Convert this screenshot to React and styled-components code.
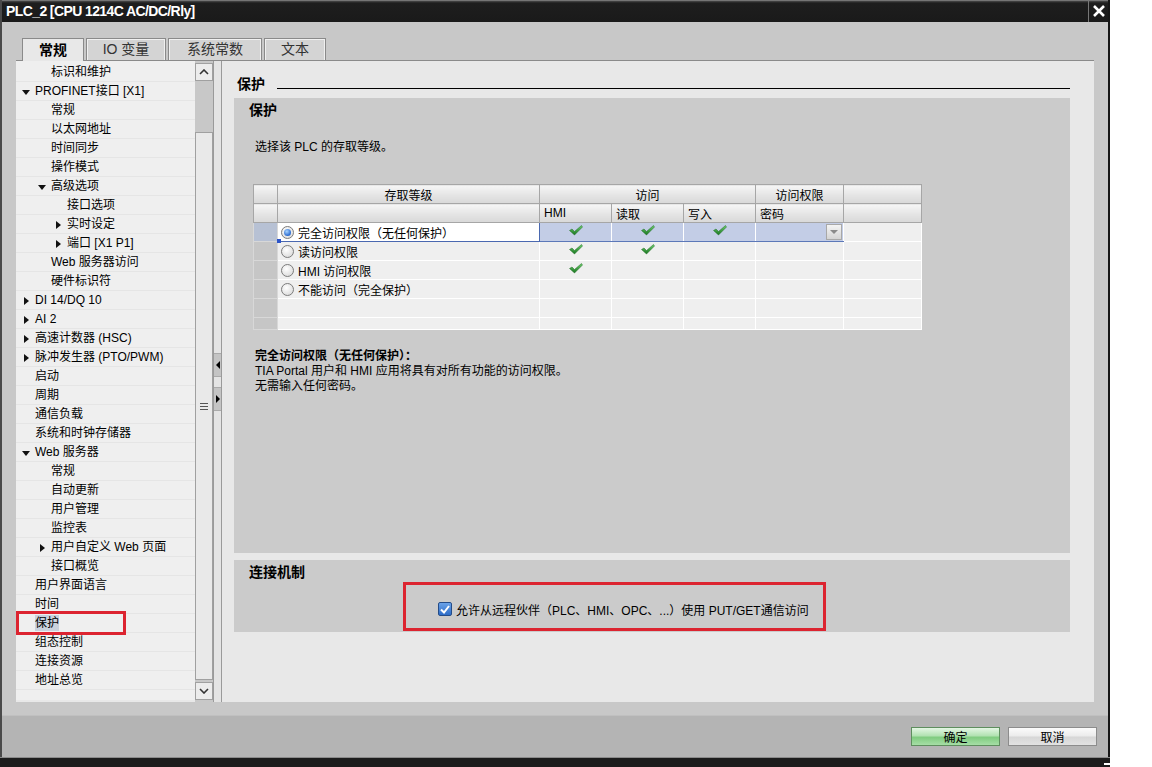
import React from 'react';
import styled, { createGlobalStyle, css } from 'styled-components';

const GlobalStyle = createGlobalStyle`
  html, body { margin: 0; padding: 0; background: #fff; }
  body { font-family: "Liberation Sans", "Noto Sans CJK SC", sans-serif; font-size: 12px; color: #000; }
  * { box-sizing: border-box; }
`;

const tree = [
  ['标识和维护', 1],
  ['PROFINET接口 [X1]', 0, 'down'],
  ['常规', 1], ['以太网地址', 1], ['时间同步', 1], ['操作模式', 1],
  ['高级选项', 1, 'down'],
  ['接口选项', 2],
  ['实时设定', 2, 'right'],
  ['端口 [X1 P1]', 2, 'right'],
  ['Web 服务器访问', 1], ['硬件标识符', 1],
  ['DI 14/DQ 10', 0, 'right'], ['AI 2', 0, 'right'],
  ['高速计数器 (HSC)', 0, 'right'], ['脉冲发生器 (PTO/PWM)', 0, 'right'],
  ['启动', 0], ['周期', 0], ['通信负载', 0], ['系统和时钟存储器', 0],
  ['Web 服务器', 0, 'down'],
  ['常规', 1], ['自动更新', 1], ['用户管理', 1], ['监控表', 1],
  ['用户自定义 Web 页面', 1, 'right'],
  ['接口概览', 1],
  ['用户界面语言', 0], ['时间', 0], ['保护', 0, null, true],
  ['组态控制', 0], ['连接资源', 0], ['地址总览', 0],
];

const levels = [
  { label: '完全访问权限（无任何保护）', hmi: true, read: true, write: true, selected: true },
  { label: '读访问权限', hmi: true, read: true },
  { label: 'HMI 访问权限', hmi: true },
  { label: '不能访问（完全保护）' },
];

const Window = styled.div`
  width: 1110px; height: 767px;
  display: flex; flex-direction: column;
  background: #c8c8c8;
  border-left: 2px solid #4a4a4a;
  border-right: 2px solid #161616;
`;

const TitleBar = styled.div`
  height: 22px; flex-shrink: 0;
  display: flex; align-items: center; justify-content: space-between;
  background: linear-gradient(#a0a0a0 0, #4a4a4a 1px, #1e1e1e 3px, #1a1a1a 100%);
  color: #fff; font-weight: 700; font-size: 14px; letter-spacing: -0.6px;
  padding-left: 4px;
`;

const CloseBtn = styled.div`
  width: 20px; height: 22px;
  display: flex; align-items: center; justify-content: center;
  border-left: 1px solid #777;
`;

const Body = styled.div`
  flex: 1; display: flex; flex-direction: column;
  padding: 16px 14px 0 14px;
`;

const TabStrip = styled.div`
  display: flex; height: 22px; padding-left: 6px; gap: 2px;
`;

const Tab = styled.div`
  height: 22px; padding: 0 12px 3px;
  display: flex; align-items: center; justify-content: center;
  font-size: 14px; border: 1px solid #8a8a8a; border-bottom: none;
  ${({ $active }) => ($active
    ? css`background: #e8e8e8; font-weight: 700; height: 23px; position: relative; z-index: 1;`
    : css`background: #d4d4d4; color: #333; box-shadow: inset 1px 1px 0 #f0f0f0, inset -1px 0 0 #f0f0f0;`)}
  min-width: ${({ $w }) => $w}px;
`;

const Panel = styled.div`
  height: 642px; display: flex;
  background: #e8e8e8; border-top: 1px solid #8a8a8a;
`;

const TreeCol = styled.div`
  width: 179px; padding-top: 2px; background: #efefef;
  height: 639px;
`;

const TreeRow = styled.div`
  position: relative; height: 19px;
  display: flex; align-items: center;
  padding-left: ${({ $level }) => 19 + $level * 16}px;
  border-bottom: 1px solid #e5e5e5;
  white-space: nowrap;
`;

const Arrow = styled.span`
  position: absolute; width: 0; height: 0;
  ${({ $dir, $level }) => ($dir === 'down'
    ? css`left: ${6 + $level * 16}px; top: 8px; border-left: 4px solid transparent; border-right: 4px solid transparent; border-top: 5px solid #111;`
    : css`left: ${8 + $level * 16}px; top: 6px; border-top: 4px solid transparent; border-bottom: 4px solid transparent; border-left: 5px solid #111;`)}
`;

const TreeLabel = styled.span`
  line-height: 16px;
  ${({ $selected }) => $selected && css`background: #c9d1dd;`}
`;

const RedMark = styled.div`
  position: absolute; left: 0; top: -3px; width: 110px; height: 24px;
  border: 3px solid #dc2430; pointer-events: none;
`;

const ScrollCol = styled.div`
  width: 18px; padding: 2px 0; display: flex; flex-direction: column;
  background: #c8c8c8;
`;

const ScrollBtn = styled.div`
  height: 18px; flex-shrink: 0;
  display: flex; align-items: center; justify-content: center;
  background: #ececec; border: 1px solid #a0a0a0;
`;

const ScrollTrack = styled.div`
  flex: 1; display: flex; flex-direction: column; padding: 51px 0 2px;
`;

const Thumb = styled.div`
  flex: 1; background: #e9e9e9; border: 1px solid #a0a0a0;
  display: flex; align-items: center; justify-content: center;
`;

const Grip = styled.div`
  width: 8px; height: 7px;
  border-top: 1px solid #555; border-bottom: 1px solid #555;
  position: relative;
  &::after { content: ''; position: absolute; left: 0; right: 0; top: 2px; border-top: 1px solid #555; }
`;

const Splitter = styled.div`
  width: 9px; display: flex; flex-direction: column; align-items: stretch;
  padding-top: 292px; gap: 10px;
  background: #e4e4e4; border-left: 1px solid #9a9a9a; border-right: 1px solid #9a9a9a;
`;

const SplitBtn = styled.div`
  height: 24px; background: #c4c4c4;
  display: flex; align-items: center; justify-content: center;
  border-top: 1px solid #aaa; border-bottom: 1px solid #aaa;
`;

const Tri = styled.span`
  width: 0; height: 0;
  border-top: 4px solid transparent; border-bottom: 4px solid transparent;
  ${({ $dir }) => ($dir === 'left' ? css`border-right: 4px solid #000;` : css`border-left: 4px solid #000;`)}
`;

const Content = styled.div`
  flex: 1; display: flex; flex-direction: column;
  padding: 0 24px 0 12px;
`;

const PageHead = styled.div`
  height: 37px; padding-top: 6px;
  display: flex; align-items: center; gap: 12px;
  font-size: 14px; font-weight: 700; padding-left: 3px;
`;

const HeadRule = styled.div`
  flex: 1; height: 1px; background: #000; margin-top: 12px;
`;

const Section = styled.section`
  background: #cbcbcb; padding: 4px 15px 0;
  height: ${({ $h }) => $h}px;
  margin-bottom: 7px;
`;

const SectionTitle = styled.div`
  font-size: 14px; font-weight: 700; line-height: 17px;
`;

const Note = styled.p`
  margin: 20px 0 0 6px; line-height: 16px;
`;

const Grid = styled.table`
  margin: 29px 0 0 4px;
  width: 668px; table-layout: fixed; border-collapse: collapse;
`;

const Th = styled.th`
  height: 19px; padding: 0 4px; font-weight: 400;
  text-align: ${({ $center }) => ($center ? 'center' : 'left')};
  background: linear-gradient(#f6f6f6, #e6e6e6 50%, #d8d8d8);
  border: 1px solid #a6a6a6;
  white-space: nowrap;
`;

const Td = styled.td`
  height: ${({ $h }) => $h || 19}px; padding: 0;
  background: #efefef;
  border: 1px solid #fff;
  text-align: center; vertical-align: middle;
  ${({ $head }) => $head && css`background: #c6c6c6; border-color: #d8d8d8;`}
  ${({ $sel }) => $sel && css`background: #c3cde6; border-top: 1px solid #5c78b8; border-bottom: 1px solid #5c78b8;`}
  ${({ $sel, $head }) => $sel && $head && css`background: #b7c1d4; border-color: #d8d8d8;`}
  ${({ $edit }) => $edit && css`background: #fff; border: 1px solid #4a68b0; position: relative;`}
`;

const LevelCell = styled.div`
  display: flex; align-items: center; gap: 4px; padding-left: 3px; white-space: nowrap;
`;

const Radio = styled.span`
  width: 13px; height: 13px; border-radius: 50%; flex-shrink: 0;
  border: 1px solid #7c7c7c;
  background: radial-gradient(circle at 40% 35%, #ffffff, #dcdcdc 80%);
  display: flex; align-items: center; justify-content: center;
  ${({ $on }) => $on && css`
    &::after { content: ''; width: 7px; height: 7px; border-radius: 50%;
      background: radial-gradient(circle at 40% 35%, #a8d4ff, #2a6ad0 70%, #1a4aa0); }
  `}
`;

const Handle = styled.span`
  position: absolute; left: -1px; bottom: -2px; width: 4px; height: 4px; background: #2c54c8;
`;

const PwCell = styled.div`
  display: flex; justify-content: flex-end; padding-right: 1px;
`;

const DropBtn = styled.span`
  width: 16px; height: 16px; display: flex; align-items: center; justify-content: center;
  background: linear-gradient(#f4f4f4, #d4d4d4); border: 1px solid #a8a8a8;
  &::after { content: ''; border-left: 4px solid transparent; border-right: 4px solid transparent; border-top: 4px solid #8a8a8a; }
`;

const Desc = styled.div`
  margin: 19px 0 0 6px; line-height: 15px;
  strong { font-weight: 700; }
`;

const RedBox = styled.div`
  margin: 1px 0 0 154px; width: 423px; height: 49px;
  border: 3px solid #dc2430;
  padding: 5px 0 0 32px;
  display: flex; align-items: center; gap: 4px;
`;

const Check = styled.span`
  width: 14px; height: 14px; border-radius: 2px; flex-shrink: 0;
  background: linear-gradient(#6aa2e8, #2d6cc8);
  border: 1px solid #244c88;
  display: flex; align-items: center; justify-content: center;
`;

const Footer = styled.div`
  height: 42px; margin: 13px -14px 0; padding: 0 11px 0 0;
  background: #b4b4b4; border-top: 1px solid #c0c0c0;
  display: flex; align-items: center; justify-content: flex-end; gap: 8px;
`;

const Button = styled.button`
  width: 89px; height: 19px; padding: 0;
  font: inherit; font-size: 12px; color: #000;
  ${({ $primary }) => ($primary
    ? css`background: linear-gradient(#e4f6e4, #b2e2b2 45%, #80cc80 55%, #a6dea6); border: 1px solid #5e8e5e;`
    : css`background: linear-gradient(#fbfbfb, #ebebeb 48%, #d6d6d6 52%, #e2e2e2); border: 1px solid #8c8c8c;`)}
`;

const BottomEdge = styled.div`
  height: 10px; flex-shrink: 0; background: #1c1c1c; border-top: 1px solid #8a8a8a;
  margin: 0 -2px; position: relative;
  &::after { content: ''; position: absolute; right: -2px; bottom: 2px; width: 6px; height: 6px;
    border-right: 2px solid #fff; border-bottom: 2px solid #fff; }
`;

const Tick = () => (
  <svg width="14" height="11" viewBox="0 0 14 11">
    <defs>
      <linearGradient id="tk" x1="0" y1="0" x2="0" y2="1">
        <stop offset="0" stopColor="#6fd06f" />
        <stop offset="1" stopColor="#17751f" />
      </linearGradient>
    </defs>
    <path d="M0.5 5.5 L3 4 L5.5 6.5 L12.5 0.5 L13.5 2 L5.5 10 Z" fill="url(#tk)" stroke="#1f6a22" strokeWidth="0.5" />
  </svg>
);

export default function App() {
  return (
    <>
      <GlobalStyle />
      <Window>
        <TitleBar>
          <span>PLC_2 [CPU 1214C AC/DC/Rly]</span>
          <CloseBtn>
            <svg width="14" height="14" viewBox="0 0 14 14">
              <path d="M2 2 L12 12 M12 2 L2 12" stroke="#fff" strokeWidth="2.6" />
            </svg>
          </CloseBtn>
        </TitleBar>
        <Body>
          <TabStrip>
            <Tab $active $w={62}>常规</Tab>
            <Tab $w={80}>IO 变量</Tab>
            <Tab $w={94}>系统常数</Tab>
            <Tab $w={62}>文本</Tab>
          </TabStrip>
          <Panel>
            <TreeCol>
              {tree.map(([label, level, arrow, selected], i) => (
                <TreeRow key={i} $level={level}>
                  {arrow && <Arrow $dir={arrow} $level={level} />}
                  <TreeLabel $selected={selected}>{label}</TreeLabel>
                  {selected && <RedMark />}
                </TreeRow>
              ))}
            </TreeCol>
            <ScrollCol>
              <ScrollBtn>
                <svg width="10" height="6" viewBox="0 0 10 6"><path d="M1 5 L5 1 L9 5" fill="none" stroke="#333" strokeWidth="1.6" /></svg>
              </ScrollBtn>
              <ScrollTrack>
                <Thumb><Grip /></Thumb>
              </ScrollTrack>
              <ScrollBtn>
                <svg width="10" height="6" viewBox="0 0 10 6"><path d="M1 1 L5 5 L9 1" fill="none" stroke="#333" strokeWidth="1.6" /></svg>
              </ScrollBtn>
            </ScrollCol>
            <Splitter>
              <SplitBtn><Tri $dir="left" /></SplitBtn>
              <SplitBtn><Tri $dir="right" /></SplitBtn>
            </Splitter>
            <Content>
              <PageHead>
                <span>保护</span>
                <HeadRule />
              </PageHead>
              <Section $h={455}>
                <SectionTitle>保护</SectionTitle>
                <Note>选择该 PLC 的存取等级。</Note>
                <Grid>
                  <colgroup>
                    <col style={{ width: 24 }} />
                    <col style={{ width: 262 }} />
                    <col style={{ width: 72 }} />
                    <col style={{ width: 72 }} />
                    <col style={{ width: 72 }} />
                    <col style={{ width: 88 }} />
                    <col style={{ width: 78 }} />
                  </colgroup>
                  <thead>
                    <tr>
                      <Th />
                      <Th $center>存取等级</Th>
                      <Th $center colSpan={3}>访问</Th>
                      <Th $center>访问权限</Th>
                      <Th />
                    </tr>
                    <tr>
                      <Th /><Th /><Th>HMI</Th><Th>读取</Th><Th>写入</Th><Th>密码</Th><Th />
                    </tr>
                  </thead>
                  <tbody>
                    {levels.map((l, i) => (
                      <tr key={i}>
                        <Td $head $sel={l.selected} />
                        <Td $edit={l.selected}>
                          <LevelCell>
                            <Radio $on={l.selected} />
                            <span>{l.label}</span>
                          </LevelCell>
                          {l.selected && <Handle />}
                        </Td>
                        <Td $sel={l.selected}>{l.hmi && <Tick />}</Td>
                        <Td $sel={l.selected}>{l.read && <Tick />}</Td>
                        <Td $sel={l.selected}>{l.write && <Tick />}</Td>
                        <Td $sel={l.selected}>{l.selected && <PwCell><DropBtn /></PwCell>}</Td>
                        <Td />
                      </tr>
                    ))}
                    <tr><Td $head /><Td /><Td /><Td /><Td /><Td /><Td /></tr>
                    <tr><Td $head $h={12} /><Td $h={12} /><Td $h={12} /><Td $h={12} /><Td $h={12} /><Td $h={12} /><Td $h={12} /></tr>
                  </tbody>
                </Grid>
                <Desc>
                  <strong>完全访问权限（无任何保护）：</strong><br />
                  TIA Portal 用户和 HMI 应用将具有对所有功能的访问权限。<br />
                  无需输入任何密码。
                </Desc>
              </Section>
              <Section $h={72}>
                <SectionTitle>连接机制</SectionTitle>
                <RedBox>
                  <Check>
                    <svg width="10" height="9" viewBox="0 0 10 9"><path d="M1 4.5 L4 7.5 L9 1" fill="none" stroke="#fff" strokeWidth="2" /></svg>
                  </Check>
                  <span>允许从远程伙伴（PLC、HMI、OPC、...）使用 PUT/GET通信访问</span>
                </RedBox>
              </Section>
            </Content>
          </Panel>
          <Footer>
            <Button $primary>确定</Button>
            <Button>取消</Button>
          </Footer>
        </Body>
        <BottomEdge />
      </Window>
    </>
  );
}
